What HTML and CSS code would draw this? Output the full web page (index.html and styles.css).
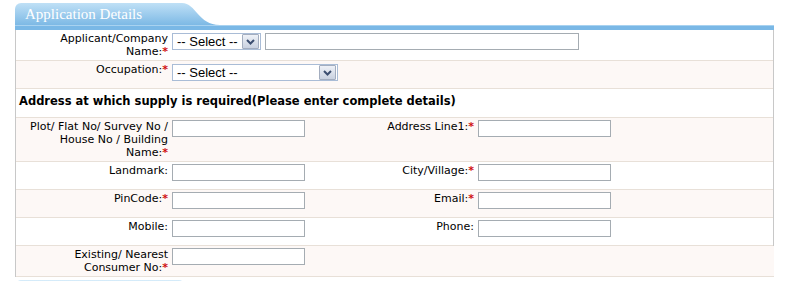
FILE: index.html
```html
<!DOCTYPE html>
<html lang="en">
<head>
  <meta charset="UTF-8">
  <title>Application Details</title>
  <link rel="stylesheet" href="styles.css">
</head>
<body>

<div class="panel">
  <div class="panel-head">
    <div class="tab">Application Details</div>
    <svg class="tab-curve" width="44" height="22" viewBox="0 0 44 22">
      <defs>
        <linearGradient id="tabGrad" x1="0" y1="0" x2="0" y2="1">
          <stop offset="0" stop-color="#bfe0f6"/>
          <stop offset="1" stop-color="#7db9e5"/>
        </linearGradient>
      </defs>
      <path d="M0 0 H6 C20 0 22 22 44 22 H0 Z" fill="url(#tabGrad)"/>
    </svg>
  </div>
  <div class="panel-bar"></div>

  <div class="form">
    <div class="row">
      <label class="lbl">Applicant/Company Name:<em>*</em></label>
      <div class="fld span3">
        <span class="select sel-short"><span class="sel-text">-- Select --</span><span class="sel-btn"><svg width="9" height="6" viewBox="0 0 9 6"><polyline points="1,1 4.5,4.5 8,1" fill="none" stroke="#3c4e70" stroke-width="2"/></svg></span></span>
        <input type="text" class="txt txt-long">
      </div>
    </div>

    <div class="row alt">
      <label class="lbl">Occupation:<em>*</em></label>
      <div class="fld span3">
        <span class="select sel-long"><span class="sel-text">-- Select --</span><span class="sel-btn"><svg width="9" height="6" viewBox="0 0 9 6"><polyline points="1,1 4.5,4.5 8,1" fill="none" stroke="#3c4e70" stroke-width="2"/></svg></span></span>
      </div>
    </div>

    <div class="row heading">
      <div class="span4">Address at which supply is required(Please enter complete details)</div>
    </div>

    <div class="row alt">
      <label class="lbl">Plot/ Flat No/ Survey No / House No / Building Name:<em>*</em></label>
      <div class="fld"><input type="text" class="txt"></div>
      <label class="lbl">Address Line1:<em>*</em></label>
      <div class="fld"><input type="text" class="txt"></div>
    </div>

    <div class="row">
      <label class="lbl">Landmark:</label>
      <div class="fld"><input type="text" class="txt"></div>
      <label class="lbl">City/Village:<em>*</em></label>
      <div class="fld"><input type="text" class="txt"></div>
    </div>

    <div class="row alt">
      <label class="lbl">PinCode:<em>*</em></label>
      <div class="fld"><input type="text" class="txt"></div>
      <label class="lbl">Email:<em>*</em></label>
      <div class="fld"><input type="text" class="txt"></div>
    </div>

    <div class="row">
      <label class="lbl">Mobile:</label>
      <div class="fld"><input type="text" class="txt"></div>
      <label class="lbl">Phone:</label>
      <div class="fld"><input type="text" class="txt"></div>
    </div>

    <div class="row alt last">
      <label class="lbl">Existing/ Nearest Consumer No:<em>*</em></label>
      <div class="fld"><input type="text" class="txt"></div>
    </div>
  </div>

  <div class="next-tab"></div>
</div>

</body>
</html>
```

FILE: styles.css
```css
body {
  margin: 0;
  padding: 0;
  background-color: #fff;
  font-family: "DejaVu Sans", Verdana, sans-serif;
  font-size: 11px;
  color: #000;
}
.panel {
  width: 759px;
  margin-left: 15px;
  padding-top: 3px;
}
.panel-head {
  display: flex;
  align-items: flex-end;
  height: 22px;
}
.tab {
  width: 161px;
  height: 22px;
  box-sizing: border-box;
  padding: 2px 0 0 10px;
  border-radius: 6px 0 0 0;
  background: linear-gradient(#bfe0f6, #7db9e5);
  color: #fff;
  font-family: "Liberation Serif", "DejaVu Serif", serif;
  font-size: 15px;
  line-height: 18px;
  white-space: nowrap;
}
.tab-curve {
  display: block;
}
.panel-bar {
  height: 5px;
  background-color: #7ab8e6;
  border-top: 1px solid #a8d2f0;
  box-sizing: border-box;
}
.form {
  border-left: 1px solid #c8c8c8;
  border-right: 1px solid #c8c8c8;
}
.row {
  display: grid;
  grid-template-columns: 154px 151px 155px 1fr;
  min-height: 28px;
  box-sizing: border-box;
  padding: 2px 0 2px;
  border-bottom: 1px solid #e8e0d8;
  background-color: #fff;
}
.row.alt {
  background-color: #fdf8f6;
}
.row.last {
  margin-right: -1px;
}
.lbl {
  text-align: right;
  padding: 0 2px 0 4px;
  line-height: 13px;
}
.lbl em {
  font-style: normal;
  color: #d01010;
  font-weight: bold;
}
.fld {
  display: flex;
  align-items: flex-start;
  gap: 4px;
  padding-left: 2px;
}
.span3 {
  grid-column: 2 / 5;
  padding-top: 1px;
}
.span4 {
  grid-column: 1 / 5;
}
.row.heading {
  min-height: 29px;
  padding: 5px 3px 0;
  font-weight: bold;
  font-size: 11.5px;
  line-height: 14px;
}
.txt {
  width: 133px;
  height: 17px;
  box-sizing: border-box;
  margin: 0;
  border: 1px solid #a5acb2;
  background-color: #fff;
  padding: 0 2px;
  font-size: 11px;
}
.txt-long {
  width: 314px;
  height: 17px;
}
.select {
  display: flex;
  align-items: center;
  height: 17px;
  box-sizing: border-box;
  border: 1px solid #a9bcd6;
  background-color: #fff;
  font-family: "Liberation Sans", Arial, sans-serif;
  font-size: 13px;
  line-height: 15px;
}
.sel-short {
  width: 89px;
}
.sel-long {
  width: 166px;
}
.sel-text {
  flex: 1;
  padding-left: 4px;
  white-space: nowrap;
}
.sel-btn {
  display: flex;
  align-items: center;
  justify-content: center;
  width: 15px;
  height: 13px;
  margin-right: 1px;
  border: 1px solid #a3adbf;
  border-radius: 1px;
  background: linear-gradient(#eef1f7, #c9d1e0);
}
.next-tab {
  width: 166px;
  height: 8px;
  margin: 3px 0 0 2px;
  border-radius: 4px 4px 0 0;
  background: linear-gradient(#d6ecfa, #b9ddf5);
}
```
